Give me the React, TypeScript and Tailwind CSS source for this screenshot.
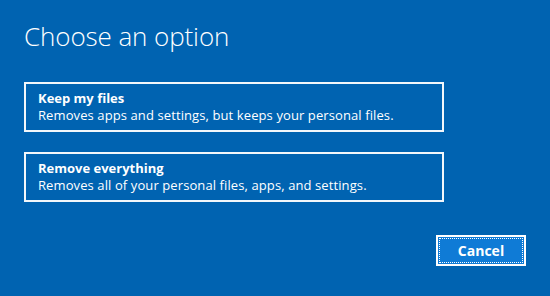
export default function App() {
  const options = [
    { title: "Keep my files", desc: "Removes apps and settings, but keeps your personal files." },
    { title: "Remove everything", desc: "Removes all of your personal files, apps, and settings." },
  ];

  return (
    <div
      className="w-[550px] h-[296px] bg-[#0063b1] text-white flex flex-col px-6"
      style={{ fontFamily: '"Open Sans", "Noto Sans", sans-serif' }}
    >
      <h1 className="mt-[19px] text-[26px] font-light leading-[35px] tracking-[-0.1px]">Choose an option</h1>

      <div className="mt-[28px] flex flex-col gap-[20px] w-[420px]">
        {options.map((o) => (
          <button
            key={o.title}
            type="button"
            className="h-[50px] border-2 border-white/95 px-[12px] flex flex-col justify-center text-left"
          >
            <span className="text-[13px] font-bold leading-[17px]">{o.title}</span>
            <span className="text-[13px] leading-[17px] tracking-[0.1px]">{o.desc}</span>
          </button>
        ))}
      </div>

      <div className="mt-[33px] flex justify-end w-[502px]">
        <button
          type="button"
          className="w-[90px] h-[31px] border-2 border-white bg-[#0f7bd6] p-[1px]"
        >
          <span className="flex h-full w-full items-center justify-center border border-dotted border-white text-[14px] font-bold">
            Cancel
          </span>
        </button>
      </div>
    </div>
  );
}
